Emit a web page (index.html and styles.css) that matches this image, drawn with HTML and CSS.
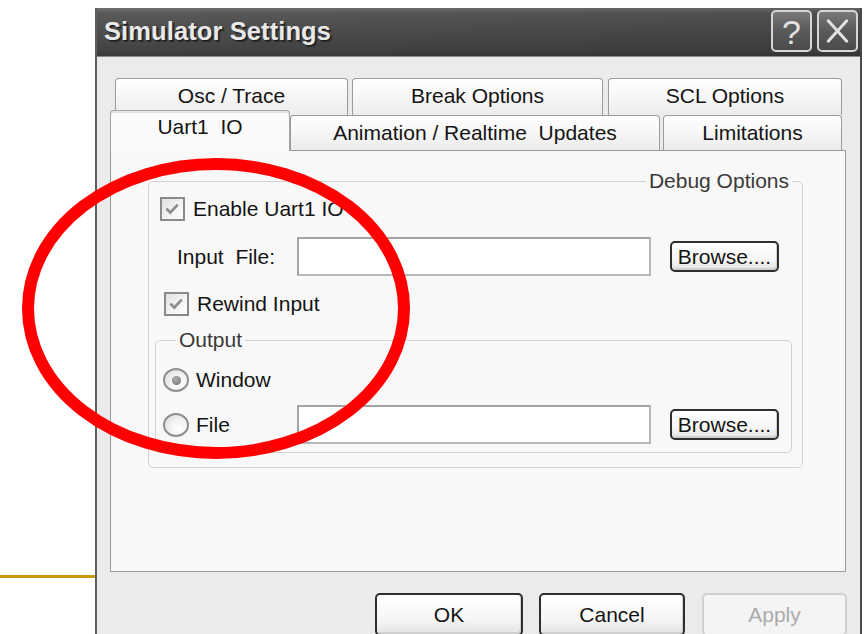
FILE: index.html
```html
<!DOCTYPE html>
<html lang="en">
<head>
<meta charset="utf-8">
<title>Simulator Settings</title>
<link rel="stylesheet" href="styles.css">
</head>
<body>
<div class="slide">
  <div class="rule-col"><div class="rule"></div></div>

  <div class="window">
    <div class="titlebar">
      <span class="title">Simulator Settings</span>
      <div class="caption-buttons">
        <span class="cap-btn help">?</span>
        <span class="cap-btn close">
          <svg viewBox="0 0 40 42" width="40" height="42">
            <path d="M10 10 L30 32 M30 10 L10 32" stroke="#e2e2e2" stroke-width="3.2" stroke-linecap="round"/>
          </svg>
        </span>
      </div>
    </div>

    <div class="client">
      <div class="tabs tabs-back">
        <div class="tab w-osc">Osc / Trace</div>
        <div class="tab w-break">Break Options</div>
        <div class="tab w-scl">SCL Options</div>
      </div>
      <div class="tabs tabs-front">
        <div class="tab tab-active w-uart">Uart1&nbsp;&nbsp;IO</div>
        <div class="tab w-anim">Animation / Realtime&nbsp;&nbsp;Updates</div>
        <div class="tab w-limit">Limitations</div>
      </div>

      <div class="panel">
        <fieldset class="group debug">
          <legend class="legend-right">Debug Options</legend>

          <label class="check-row enable">
            <span class="checkbox">
              <svg viewBox="0 0 24 24" width="22" height="22"><path d="M5 11.5 L9.5 16 L18 7" fill="none" stroke="#8c8c8c" stroke-width="3"/></svg>
            </span>
            <span>Enable Uart1 IO</span>
          </label>

          <div class="field-row input-row">
            <span class="field-label">Input&nbsp;&nbsp;File:</span>
            <span class="textbox"></span>
            <span class="button browse">Browse....</span>
          </div>

          <label class="check-row rewind">
            <span class="checkbox">
              <svg viewBox="0 0 24 24" width="22" height="22"><path d="M5 11.5 L9.5 16 L18 7" fill="none" stroke="#8c8c8c" stroke-width="3"/></svg>
            </span>
            <span>Rewind Input</span>
          </label>

          <fieldset class="group output">
            <legend class="legend-left">Output</legend>
            <label class="radio-row window-row">
              <span class="radio radio-on"><span class="dot"></span></span>
              <span>Window</span>
            </label>
            <div class="field-row file-row">
              <label class="radio-row file-label">
                <span class="radio"></span>
                <span>File</span>
              </label>
              <span class="textbox"></span>
              <span class="button browse">Browse....</span>
            </div>
          </fieldset>
        </fieldset>
      </div>

      <div class="actions">
        <span class="button action w-ok">OK</span>
        <span class="button action w-cancel">Cancel</span>
        <span class="button action w-apply disabled">Apply</span>
      </div>
    </div>
  </div>

  <svg class="highlight" viewBox="0 0 867 634" width="867" height="634">
    <ellipse cx="216" cy="308.5" rx="188" ry="144.5" fill="none" stroke="#ff0000" stroke-width="12"/>
  </svg>
</div>
</body>
</html>
```

FILE: styles.css
```css
* { box-sizing: border-box; }

html, body {
  margin: 0;
  padding: 0;
  background: #ffffff;
  overflow: hidden;
}

body {
  font-family: "Liberation Sans", Arial, sans-serif;
  font-size: 21px;
  line-height: 24px;
  color: #141414;
}

.slide {
  position: relative;
  width: 867px;
  height: 634px;
  overflow: hidden;
  display: flex;
  align-items: flex-start;
}

/* gold rule of the slide, running under the dialog */
.rule-col {
  width: 95px;
  flex: none;
  padding-top: 575px;
}
.rule {
  height: 3px;
  background: #c99a0b;
}

/* dialog window, its lower edge runs off the slide */
.window {
  margin-top: 8px;
  width: 767px;
  height: 626px;
  overflow: hidden;
  flex: none;
  background: #ebebeb;
  border-left: 2px solid #5e5e5e;
  border-right: 2px solid #4a4a4a;
  display: flex;
  flex-direction: column;
}

.titlebar {
  height: 49px;
  flex: none;
  display: flex;
  align-items: center;
  justify-content: space-between;
  padding: 0 2px 0 7px;
  background:
    linear-gradient(to right, rgba(0,0,0,0) 0%, rgba(0,0,0,0.12) 100%),
    linear-gradient(to bottom, #707070 0%, #585858 12%, #4c4c4c 55%, #424242 90%, #3a3a3a 100%);
  border-bottom: 1px solid #8a8a8a;
}

.title {
  font-weight: bold;
  font-size: 25.5px;
  color: #e9e9e9;
  text-shadow: 1px 1px 0 #1e1e1e, 2px 2px 1px #2a2a2a;
  letter-spacing: 0.1px;
  padding-bottom: 2px;
}

.caption-buttons {
  display: flex;
  gap: 5px;
  align-self: flex-start;
  margin-top: 2px;
}

.cap-btn {
  width: 41px;
  height: 42px;
  border: 2px solid #d6d6d6;
  border-radius: 5px;
  background: linear-gradient(to bottom, #7a7a7a 0%, #5c5c5c 45%, #4a4a4a 100%);
  display: flex;
  align-items: center;
  justify-content: center;
  color: #e2e2e2;
}

.help {
  font-size: 34px;
  line-height: 34px;
  padding-top: 2px;
}

.close svg { display: block; }

.client {
  padding: 21px 14px 0 13px;
  display: flex;
  flex-direction: column;
}

/* two-row tab strip */
.tabs {
  display: flex;
}

.tabs-back {
  margin-left: 5px;
  height: 37px;
}
.tabs-back .w-osc { margin-right: 4px; }
.tabs-back .w-break { margin-right: 5px; }

.tabs-front {
  height: 35px;
  align-items: flex-end;
  position: relative;
  z-index: 1;
}
.tabs-front .w-anim { margin-right: 3px; }

.tab {
  height: 100%;
  flex: none;
  text-align: center;
  padding-top: 5px;
  border: 1px solid #9c9c9c;
  border-bottom: none;
  border-radius: 4px 4px 0 0;
  background: linear-gradient(to bottom, #ffffff 0%, #f6f6f6 50%, #ececec 100%);
  white-space: nowrap;
}

.tab-active {
  height: 41px;
  margin-bottom: -1px;
  padding-top: 4px;
  background: #fafafa;
  border-color: #a4a4a4;
  box-shadow: inset 0 2px 0 #e4e4e4;
}

.w-osc { width: 233px; }
.w-break { width: 251px; }
.w-scl { width: 234px; }
.w-uart { width: 180px; }
.w-anim { width: 370px; }
.w-limit { width: 179px; }

.panel {
  height: 422px;
  flex: none;
  border: 1px solid #9a9a9a;
  background: #f8f8f8;
  padding: 18px 42px 0 37px;
}

/* group boxes */
.group {
  margin: 0;
  border: 1px solid #d2d2d2;
  border-radius: 5px;
  min-width: 0;
}

.group legend {
  line-height: 24px;
  padding: 0 3px;
  color: #3a3a3a;
}

.legend-right {
  margin-left: auto;
  margin-right: 10px;
}

.legend-left {
  margin-left: 13px;
  color: #555555;
}

.debug {
  padding: 4px 0 14px 0;
}

.check-row, .radio-row {
  display: flex;
  align-items: center;
  gap: 8px;
  height: 24px;
}

.checkbox {
  width: 25px;
  height: 24px;
  flex: none;
  border: 2px solid #8a8a8a;
  background: linear-gradient(135deg, #e2e2e2 0%, #f4f4f4 60%, #ffffff 100%);
  display: flex;
  align-items: center;
  justify-content: center;
}
.checkbox svg { display: block; }

.enable { margin-left: 11px; }
.rewind { margin-left: 15px; margin-top: 16px; }

.field-row {
  display: flex;
  align-items: center;
  height: 39px;
}

.input-row {
  margin-top: 16px;
  margin-left: 28px;
}

.field-label {
  width: 120px;
  flex: none;
}

.textbox {
  width: 354px;
  height: 39px;
  flex: none;
  border: 2px solid #a3a3a3;
  border-right-color: #b8b8b8;
  border-bottom-color: #b8b8b8;
  background: #ffffff;
}

.button {
  display: flex;
  align-items: center;
  justify-content: center;
  flex: none;
  border: 2px solid #2e2e2e;
  border-radius: 5px;
  background: linear-gradient(to bottom, #ffffff 0%, #f6f6f6 60%, #e4e4e4 100%);
  box-shadow: inset -1px -2px 0 #cfcfcf;
}

.browse {
  width: 109px;
  height: 31px;
  margin-left: 19px;
}

.output {
  margin: 12px 10px 0 6px;
  padding: 16px 0 8px 7px;
}

.radio {
  width: 26px;
  height: 24px;
  flex: none;
  border: 2px solid #8e8e8e;
  border-radius: 50%;
  background: radial-gradient(circle at 65% 70%, #ffffff 0%, #f2f2f2 45%, #d8d8d8 100%);
  display: flex;
  align-items: center;
  justify-content: center;
}

.radio-on .dot {
  width: 9px;
  height: 9px;
  border-radius: 50%;
  background: radial-gradient(circle at 40% 35%, #b0b0b0 0%, #7a7a7a 80%);
}

.radio-row { gap: 7px; }

.file-row { margin-top: 13px; }

.file-label {
  width: 134px;
  flex: none;
}

/* dialog buttons */
.actions {
  display: flex;
  justify-content: flex-end;
  margin-top: 21px;
  margin-right: -1px;
}

.action {
  height: 43px;
  flex: none;
}

.w-ok { width: 148px; }
.w-cancel { width: 146px; margin-left: 16px; }
.w-apply { width: 145px; margin-left: 17px; }

.disabled {
  color: #ababab;
  border-color: #d0d0d0;
  background: #f4f4f4;
  box-shadow: none;
}

/* red highlight ring drawn over the dialog */
.highlight {
  position: absolute;
  left: 0;
  top: 0;
  pointer-events: none;
}
```
